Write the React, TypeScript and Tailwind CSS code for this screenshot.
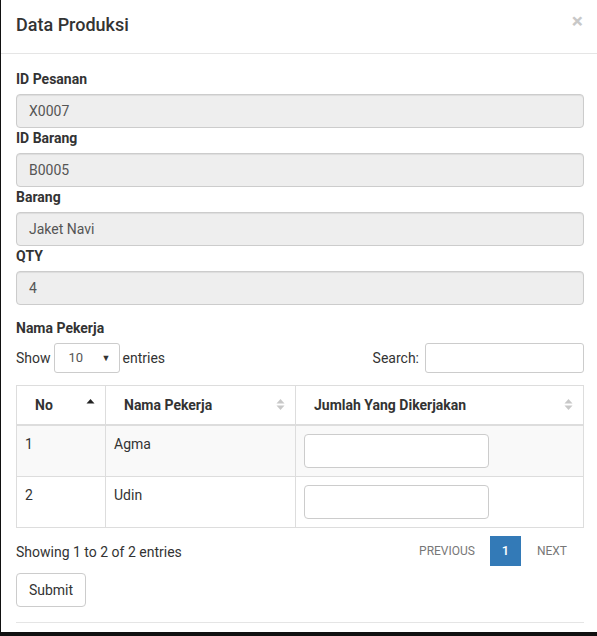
import React from "react";

const fields = [
  ["ID Pesanan", "X0007"],
  ["ID Barang", "B0005"],
  ["Barang", "Jaket Navi"],
  ["QTY", "4"],
] as const;

const workers = [
  [1, "Agma"],
  [2, "Udin"],
] as const;

function SortBoth() {
  return (
    <svg width="9" height="13" viewBox="0 0 9 13" className="shrink-0">
      <path d="M0.5 5.5 L4.5 1 L8.5 5.5 Z" fill="#c8c8c8" />
      <path d="M0.5 7.5 L4.5 12 L8.5 7.5 Z" fill="#c8c8c8" />
    </svg>
  );
}

function SortUp() {
  return (
    <svg width="9" height="13" viewBox="0 0 9 13" className="shrink-0">
      <path d="M0.5 5.5 L4.5 1 L8.5 5.5 Z" fill="#222" />
    </svg>
  );
}

const inputCls =
  "h-[34px] w-full rounded-[4px] border border-[#ccc] px-3 text-[14px] text-[#555] shadow-[inset_0_1px_1px_rgba(0,0,0,0.075)]";

export default function App() {
  return (
    <div className="h-[636px] w-[597px] overflow-hidden bg-[#111] font-['Roboto',sans-serif] text-[14px] leading-[20px] text-[#333]">
      <div className="ml-[1px] h-[632px] bg-white">
        {/* header */}
        <div className="flex h-[54px] items-start justify-between border-b border-[#e5e5e5] pl-[15px] pr-[14px] pt-[12px]">
          <h4 className="text-[18px] font-medium leading-[25px]">Data Produksi</h4>
          <span className="mt-[-3px] text-[21px] font-bold leading-[25px] text-[#c8c8c8]">×</span>
        </div>

        {/* body */}
        <div className="pl-[15px] pr-[13px] pt-[15px]">
          {fields.map(([label, value]) => (
            <div key={label}>
              <label className="mb-[5px] block font-bold">{label}</label>
              <div className={`${inputCls} flex items-center bg-[#eee] pl-[12px]`}>{value}</div>
            </div>
          ))}

          <label className="mb-[5px] mt-[13px] block font-bold">Nama Pekerja</label>

          <div className="flex h-[30px] items-center justify-between">
            <div className="flex items-center gap-[3px]">
              <span>Show</span>
              <div className="flex h-[30px] w-[66px] items-center justify-between rounded-[3px] border border-[#ccc] pl-[14px] pr-[8px] text-[13px] text-[#555]">
                <span>10</span>
                <span className="text-[9px] text-[#333]">▼</span>
              </div>
              <span>entries</span>
            </div>
            <div className="flex items-center gap-[6px]">
              <span>Search:</span>
              <div className="h-[30px] w-[159px] rounded-[3px] border border-[#ccc]" />
            </div>
          </div>

          <table className="mt-[12px] w-full table-fixed border-collapse border border-[#ddd]">
            <colgroup>
              <col className="w-[89px]" />
              <col className="w-[190px]" />
              <col />
            </colgroup>
            <thead>
              <tr className="h-[39px] border-b-2 border-[#ddd]">
                <th className="border-r border-[#ddd] pl-[18px] pr-[10px] text-left font-bold">
                  <div className="flex items-center justify-between">
                    No <SortUp />
                  </div>
                </th>
                <th className="border-r border-[#ddd] pl-[18px] pr-[10px] text-left font-bold">
                  <div className="flex items-center justify-between">
                    Nama Pekerja <SortBoth />
                  </div>
                </th>
                <th className="pl-[18px] pr-[10px] text-left font-bold">
                  <div className="flex items-center justify-between">
                    Jumlah Yang Dikerjakan <SortBoth />
                  </div>
                </th>
              </tr>
            </thead>
            <tbody>
              {workers.map(([no, name], i) => (
                <tr key={no} className={`border-b border-[#ddd] ${i === 0 ? "bg-[#f9f9f9]" : "bg-white"}`}>
                  <td className="border-r border-[#ddd] p-[8px] align-top">{no}</td>
                  <td className="border-r border-[#ddd] p-[8px] align-top">{name}</td>
                  <td className="px-[8px] pb-[8px] pt-[8px] align-top">
                    <div className="h-[34px] w-[185px] rounded-[4px] border border-[#ccc] bg-white" />
                  </td>
                </tr>
              ))}
            </tbody>
          </table>

          <div className="mt-[8px] flex items-center justify-between">
            <span className="pt-[2px]">Showing 1 to 2 of 2 entries</span>
            <div className="flex items-center pr-[17px] text-[12px] uppercase text-[#777]">
              <span className="px-[15px]">Previous</span>
              <span className="flex h-[30px] w-[31px] items-center justify-center bg-[#337ab7] text-[13px] font-medium text-white">
                1
              </span>
              <span className="pl-[16px]">Next</span>
            </div>
          </div>

          <button className="mt-[7px] h-[34px] w-[70px] rounded-[4px] border border-[#ccc] bg-white text-[14px] text-[#333]">
            Submit
          </button>

          <div className="mt-[15px] border-t border-[#e5e5e5]" />
        </div>
      </div>
    </div>
  );
}
